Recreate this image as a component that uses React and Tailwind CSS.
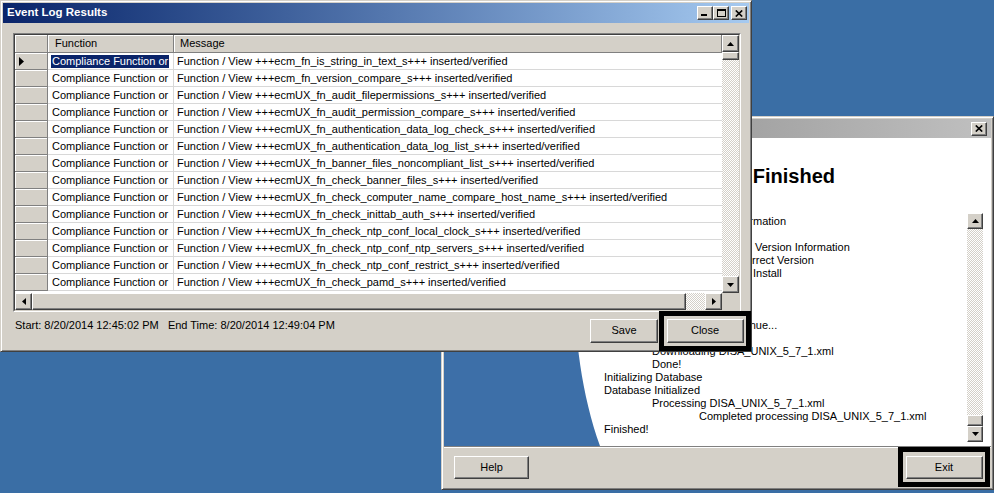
import React from 'react'

const bevel = 'bg-[#d4d0c8] border border-t-white border-l-white border-r-[#404040] border-b-[#404040] shadow-[inset_-1px_-1px_#808080]'
const hatch = 'bg-[image:repeating-conic-gradient(#d4d0c8_0_25%,#ffffff_0_50%)] bg-[length:2px_2px]'
const cellHead = 'bg-[#d4d0c8] border-r border-b border-r-[#808080] border-b-[#808080] shadow-[inset_1px_1px_#ffffff]'

const Arrow = ({ dir }) => {
  const shapes = {
    up: { w: 7, h: 4, p: '0,4 3.5,0 7,4' },
    down: { w: 7, h: 4, p: '0,0 7,0 3.5,4' },
    left: { w: 4, h: 7, p: '4,0 4,7 0,3.5' },
    right: { w: 4, h: 7, p: '0,0 4,3.5 0,7' },
  }
  const s = shapes[dir]
  return (
    <svg width={s.w} height={s.h} viewBox={`0 0 ${s.w} ${s.h}`}>
      <polygon points={s.p} fill="#000" />
    </svg>
  )
}

const CloseGlyph = () => (
  <svg width="8" height="7" viewBox="0 0 8 7">
    <path d="M0.8 0.5 L7.2 6.5 M7.2 0.5 L0.8 6.5" stroke="#000" strokeWidth="1.7" />
  </svg>
)

const messages = [
  'ecm_fn_is_string_in_text_s',
  'ecm_fn_version_compare_s',
  'ecmUX_fn_audit_filepermissions_s',
  'ecmUX_fn_audit_permission_compare_s',
  'ecmUX_fn_authentication_data_log_check_s',
  'ecmUX_fn_authentication_data_log_list_s',
  'ecmUX_fn_banner_files_noncompliant_list_s',
  'ecmUX_fn_check_banner_files_s',
  'ecmUX_fn_check_computer_name_compare_host_name_s',
  'ecmUX_fn_check_inittab_auth_s',
  'ecmUX_fn_check_ntp_conf_local_clock_s',
  'ecmUX_fn_check_ntp_conf_ntp_servers_s',
  'ecmUX_fn_check_ntp_conf_restrict_s',
  'ecmUX_fn_check_pamd_s',
]

// log lines of the import window, pl = indent in px
const logLines = [
  { pl: 'pl-[127px]', text: 'Information' },
  { pl: 'pl-[48px]', text: 'Checking' },
  { pl: 'pl-[151px]', text: 'Version Information' },
  { pl: 'pl-[134px]', text: 'Correct Version' },
  { pl: 'pl-[149px]', text: 'Install' },
  { pl: 'pl-[0px]', text: 'Downloading' },
  { pl: 'pl-[48px]', text: 'Connecting' },
  { pl: 'pl-[48px]', text: 'Connected' },
  { pl: 'pl-[120px]', text: 'Continue...' },
  { pl: 'pl-[0px]', text: '' },
  { pl: 'pl-[48px]', text: 'Downloading DISA_UNIX_5_7_1.xml' },
  { pl: 'pl-[48px]', text: 'Done!' },
  { pl: 'pl-[0px]', text: 'Initializing Database' },
  { pl: 'pl-[0px]', text: 'Database Initialized' },
  { pl: 'pl-[48px]', text: 'Processing DISA_UNIX_5_7_1.xml' },
  { pl: 'pl-[95px]', text: 'Completed processing DISA_UNIX_5_7_1.xml' },
  { pl: 'pl-[0px]', text: 'Finished!' },
]

const EventLogWindow = () => (
  <div className="absolute left-0 top-0 w-[752px] h-[352px] bg-[#d4d0c8] border border-t-[#d4d0c8] border-l-[#d4d0c8] border-r-[#404040] border-b-[#404040] shadow-[inset_1px_1px_#ffffff,inset_-1px_-1px_#808080] p-[2px] flex flex-col">
    {/* title bar */}
    <div className="h-[21px] bg-linear-to-r from-[#0a246a] to-[#a6caf0] flex items-center pl-[4px] pr-[2px]">
      <span className="text-white font-bold text-[11.5px]">Event Log Results</span>
      <div className="ml-auto flex items-center">
        <div className={`w-[16px] h-[14px] ${bevel} flex items-end justify-start pl-[3px] pb-[3px]`}>
          <div className="w-[6px] h-[2px] bg-black" />
        </div>
        <div className={`w-[16px] h-[14px] ${bevel} flex items-center justify-center`}>
          <div className="w-[9px] h-[8px] border border-black border-t-2" />
        </div>
        <div className={`w-[16px] h-[14px] ml-[2px] ${bevel} flex items-center justify-center`}>
          <CloseGlyph />
        </div>
      </div>
    </div>

    <div className="pl-[10px] pt-[10px] flex flex-col">
      {/* grid */}
      <div className="w-[728px] h-[279px] border border-t-[#808080] border-l-[#808080] border-b-white border-r-white">
        <div className="h-full border border-t-[#404040] border-l-[#404040] border-b-[#d4d0c8] border-r-[#d4d0c8] bg-white flex flex-col">
          <div className="flex h-[258px]">
            <div className="flex-1 overflow-hidden">
              <div className="flex h-[18px]">
                <div className={`w-[33px] ${cellHead}`} />
                <div className={`w-[126px] ${cellHead} flex items-center pl-[7px]`}>Function</div>
                <div className={`flex-1 ${cellHead} flex items-center pl-[6px]`}>Message</div>
              </div>
              {messages.map((m, i) => (
                <div key={m} className="flex h-[17px]">
                  <div className={`w-[33px] ${cellHead} flex items-center pl-[4px]`}>
                    {i === 0 && (
                      <svg width="5" height="9" viewBox="0 0 5 9">
                        <polygon points="0,0 5,4.5 0,9" fill="#000" />
                      </svg>
                    )}
                  </div>
                  <div className="w-[126px] border-r border-b border-[#d8d8d8] flex items-center pl-[3px] whitespace-nowrap overflow-hidden">
                    {i === 0 ? (
                      <span className="bg-[#0a246a] text-white px-[1px] leading-[13px]">Compliance Function or</span>
                    ) : (
                      <span className="px-[1px]">Compliance Function or</span>
                    )}
                  </div>
                  <div className="flex-1 border-b border-[#d8d8d8] flex items-center pl-[3px] whitespace-nowrap">
                    {`Function / View +++${m}+++ inserted/verified`}
                  </div>
                </div>
              ))}
            </div>
            <div className="w-[17px] flex flex-col">
              <div className={`h-[17px] ${bevel} flex items-center justify-center`}><Arrow dir="up" /></div>
              <div className={`h-[8px] ${bevel}`} />
              <div className={`flex-1 ${hatch}`} />
              <div className={`h-[17px] ${bevel} flex items-center justify-center`}><Arrow dir="down" /></div>
            </div>
          </div>
          <div className="flex h-[17px]">
            <div className="flex-1 flex">
              <div className={`w-[17px] ${bevel} flex items-center justify-center`}><Arrow dir="left" /></div>
              <div className={`w-[654px] ${bevel}`} />
              <div className={`flex-1 ${hatch}`} />
              <div className={`w-[17px] ${bevel} flex items-center justify-center`}><Arrow dir="right" /></div>
            </div>
            <div className="w-[17px] bg-[#d4d0c8]" />
          </div>
        </div>
      </div>

      {/* footer */}
      <div className="h-[37px] flex items-center pr-[8px]">
        <span className="pl-[2px] mb-[10px] whitespace-pre">Start: 8/20/2014 12:45:02 PM   End Time: 8/20/2014 12:49:04 PM</span>
        <div className="ml-auto flex items-center">
          <button className={`w-[68px] h-[24px] ${bevel} mr-[1px]`}>Save</button>
          <div className="w-[92px] h-[40px] border-[5px] border-black flex items-center justify-center -mr-[10px]">
            <button className={`w-[77px] h-[24px] ${bevel}`}>Close</button>
          </div>
        </div>
      </div>
    </div>
  </div>
)

const ImportWindow = () => (
  <div className="absolute left-[441px] top-[116px] w-[553px] h-[374px] bg-[#d4d0c8] border border-t-[#d4d0c8] border-l-[#d4d0c8] border-r-[#404040] border-b-[#404040] shadow-[inset_1px_1px_#ffffff,inset_-1px_-1px_#808080] p-[2px] flex flex-col">
    <div className="h-[19px] bg-linear-to-r from-[#808080] to-[#c0c0c0] flex items-center pl-[4px] pr-[4px]">
      <div className={`ml-auto w-[16px] h-[14px] ${bevel} flex items-center justify-center`}>
        <CloseGlyph />
      </div>
    </div>

    <div className="h-[308px] bg-white flex">
      <svg width="160" height="308" viewBox="0 0 160 308" className="shrink-0">
        <path d="M0 0 L140 0 C125 120 125 220 156 308 L0 308 Z" fill="#3d6fa8" />
      </svg>
      <div className="flex-1 flex flex-col pt-[26px]">
        <h2 className="text-[20px] leading-[24px] font-bold pl-[81px] text-black whitespace-nowrap">Import Finished</h2>
        <div className="mt-[25px] h-[229px] mr-[8px] flex">
          <div className="flex-1 pt-[2px] overflow-hidden">
            {logLines.map((l, i) => (
              <div key={i} className={`h-[13px] leading-[13px] whitespace-nowrap ${l.pl}`}>{l.text}</div>
            ))}
          </div>
          <div className="w-[16px] flex flex-col">
            <div className={`h-[16px] ${bevel} flex items-center justify-center`}><Arrow dir="up" /></div>
            <div className={`flex-1 ${hatch}`} />
            <div className={`h-[11px] ${bevel}`} />
            <div className={`h-[16px] ${bevel} flex items-center justify-center`}><Arrow dir="down" /></div>
          </div>
        </div>
      </div>
    </div>

    <div className="h-[2px] border-t border-t-[#808080] border-b border-b-white" />

    <div className="h-[38px] flex items-center pl-[10px]">
      <button className={`w-[75px] h-[23px] ${bevel}`}>Help</button>
      <div className="ml-auto mr-[1px] w-[92px] h-[40px] border-[5px] border-black flex items-center justify-center">
        <button className={`w-[77px] h-[23px] ${bevel}`}>Exit</button>
      </div>
    </div>
  </div>
)

const App = () => {
  return (
    <div className="relative w-[994px] h-[493px] overflow-hidden bg-[#3a6ea5] font-['Liberation_Sans',Arial,sans-serif] text-[11px] text-black">
      <ImportWindow />
      <EventLogWindow />
    </div>
  )
}

export default App
